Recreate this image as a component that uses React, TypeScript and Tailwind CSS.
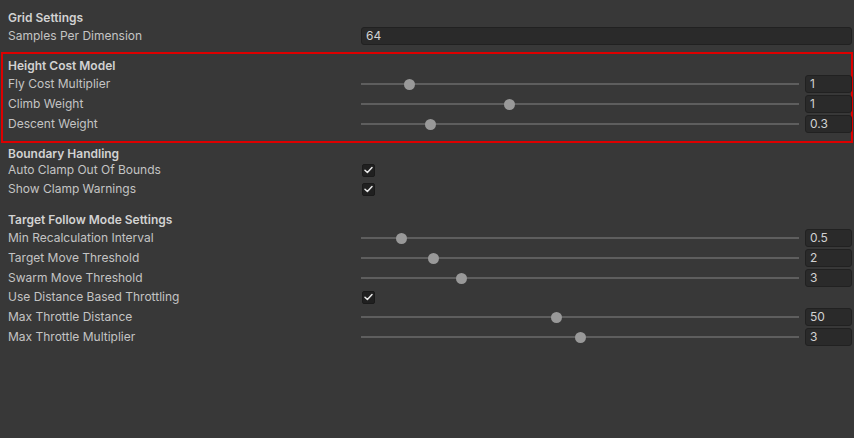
import React from "react";

const TRACK_LEFT = 361;

function Label({ children }: { children: React.ReactNode }) {
  return <div className="w-[353px] shrink-0 text-[12px] text-[#c4c4c4] leading-[18px] truncate">{children}</div>;
}

function Header({ children, className = "" }: { children: React.ReactNode; className?: string }) {
  return (
    <div className={"flex items-center pl-2 text-[12px] leading-[14px] font-semibold text-[#d2d2d2] " + className}>{children}</div>
  );
}

function NumberField({ value, className = "" }: { value: string; className?: string }) {
  return (
    <div
      className={
        "h-[18px] rounded-[3px] bg-[#2a2a2a] border border-[#212121] flex items-center pl-[4px] text-[12px] text-[#d2d2d2] " +
        className
      }
    >
      {value}
    </div>
  );
}

function SliderRow({ label, value, thumb, className = "" }: { label: string; value: string; thumb: number; className?: string }) {
  return (
    <div className={"h-[18px] flex items-center pl-2 pr-[2px] " + className}>
      <Label>{label}</Label>
      <div className="flex-1 flex items-center gap-[6px]">
        <div className="relative flex-1 h-[18px]">
          <div className="absolute left-0 right-0 top-[8px] h-[2px] bg-[#5e5e5e]" />
          <div
            className="absolute top-[4px] w-[11px] h-[11px] rounded-full bg-[#999999]"
            style={{ left: thumb - TRACK_LEFT - 5.5 }}
          />
        </div>
        <NumberField value={value} className="w-[47px]" />
      </div>
    </div>
  );
}

function CheckRow({ label, className = "" }: { label: string; className?: string }) {
  return (
    <div className={"h-[18px] flex items-center pl-2 " + className}>
      <Label>{label}</Label>
      <div className="w-[13px] h-[13px] ml-[1px] rounded-[2px] bg-[#202020] border border-[#1a1a1a] flex items-center justify-center">
        <svg width="9" height="8" viewBox="0 0 9 8" fill="none">
          <path d="M1 4.2 L3.4 6.5 L8 1.5" stroke="#e8e8e8" strokeWidth="1.5" strokeLinecap="round" strokeLinejoin="round" />
        </svg>
      </div>
    </div>
  );
}

export default function App() {
  return (
    <div
      className="w-[854px] h-[438px] bg-[#383838] overflow-hidden pt-[9px]"
      style={{ fontFamily: "Inter, 'Noto Sans', sans-serif" }}
    >
      <Header className="h-[18px]">Grid Settings</Header>
      <div className="h-[18px] flex items-center pl-2 pr-[2px]">
        <Label>Samples Per Dimension</Label>
        <NumberField value="64" className="flex-1" />
      </div>

      <div className="mt-[7px] ml-[1px] mr-[1px] border-2 border-[#dd0000] pt-[3px] pb-[8px]">
        <div className="-ml-[3px] -mr-[3px]">
          <Header className="h-[18px]">Height Cost Model</Header>
          <SliderRow label="Fly Cost Multiplier" value="1" thumb={409} />
          <SliderRow label="Climb Weight" value="1" thumb={509} className="mt-[2px]" />
          <SliderRow label="Descent Weight" value="0.3" thumb={430} className="mt-[2px]" />
        </div>
      </div>

      <Header className="mt-[4px] h-[14px]">Boundary Handling</Header>
      <CheckRow label="Auto Clamp Out Of Bounds" />
      <CheckRow label="Show Clamp Warnings" className="mt-[1px]" />

      <Header className="mt-[13px] h-[18px]">Target Follow Mode Settings</Header>
      <SliderRow label="Min Recalculation Interval" value="0.5" thumb={401} />
      <SliderRow label="Target Move Threshold" value="2" thumb={433} className="mt-[2px]" />
      <SliderRow label="Swarm Move Threshold" value="3" thumb={461} className="mt-[2px]" />
      <CheckRow label="Use Distance Based Throttling" className="mt-[1px]" />
      <SliderRow label="Max Throttle Distance" value="50" thumb={556} className="mt-[2px]" />
      <SliderRow label="Max Throttle Multiplier" value="3" thumb={580} className="mt-[2px]" />
    </div>
  );
}
